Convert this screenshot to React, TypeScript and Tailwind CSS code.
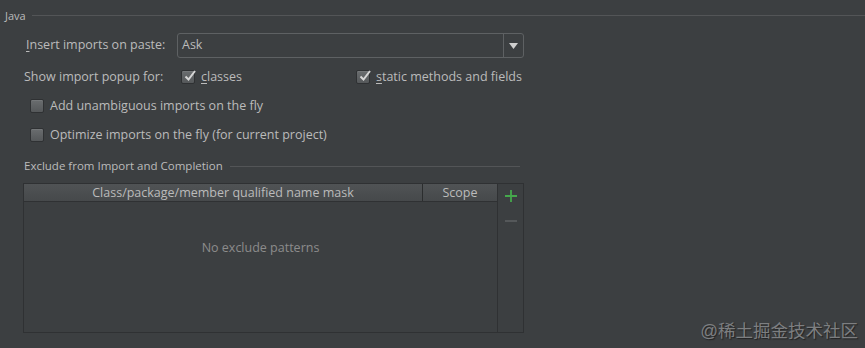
import React from "react";

function CheckBox({ checked }: { checked?: boolean }) {
  return (
    <span className="relative flex h-[14px] w-[14px] shrink-0 items-center justify-center rounded-[2px] border border-[#2f3133] bg-gradient-to-b from-[#6a6d6f] to-[#55585a] shadow-[inset_0_1px_0_rgba(255,255,255,0.08)]">
      {checked ? (
        <svg width="14" height="14" viewBox="0 0 14 14" className="absolute -top-[2px] left-[1px]">
          <path d="M2.5 7.5 L5.5 10.5 L12 2" fill="none" stroke="#d6d6d6" strokeWidth="2" />
        </svg>
      ) : null}
    </span>
  );
}

export default function App() {
  return (
    <div
      className="relative h-[348px] w-[865px] overflow-hidden bg-[#3c3f41] text-[12.5px] text-[#bbbbbb]"
      style={{ fontFamily: '"Open Sans", "Liberation Sans", sans-serif' }}
    >
      {/* Java title */}
      <div className="flex h-[21px] items-center pl-[5px] pt-[9px]">
        <span className="text-[11px] leading-none">Java</span>
        <div className="ml-[6px] h-px flex-1 bg-[#535557]" />
      </div>

      <div className="pl-[24px]">
        {/* Insert imports */}
        <div className="mt-[12px] flex h-[25px] items-center">
          <span className="w-[153px] pl-[2px]">
            <span className="underline underline-offset-2">I</span>nsert imports on paste:
          </span>
          <div className="flex h-[25px] w-[347px] items-stretch rounded-[3px] border border-[#5e6163] bg-[#3c3f41]">
            <span className="flex flex-1 items-center pl-[4px]">Ask</span>
            <span className="flex w-[20px] items-center justify-center border-l border-[#5e6163]">
              <svg width="9" height="6" viewBox="0 0 9 6">
                <path d="M0 0 H9 L4.5 6 Z" fill="#cfcfcf" />
              </svg>
            </span>
          </div>
        </div>

        {/* Show import popup */}
        <div className="mt-[9px] flex h-[20px] items-center">
          <span className="w-[157px]">Show import popup for:</span>
          <CheckBox checked />
          <span className="ml-[6px] w-[155px]">
            <span className="underline underline-offset-2">c</span>lasses
          </span>
          <CheckBox checked />
          <span className="ml-[6px]">
            <span className="underline underline-offset-2">s</span>tatic methods and fields
          </span>
        </div>

        {/* checkboxes */}
        <div className="mt-[9px] flex h-[20px] items-center pl-[6px]">
          <CheckBox />
          <span className="ml-[6px]">Add unambiguous imports on the fly</span>
        </div>
        <div className="mt-[9px] flex h-[20px] items-center pl-[6px]">
          <CheckBox />
          <span className="ml-[6px]">Optimize imports on the fly (for current project)</span>
        </div>

        {/* Exclude section */}
        <div className="mt-[11px] flex h-[20px] items-center pr-[345px]">
          <span className="text-[11.5px]">Exclude from Import and Completion</span>
          <div className="ml-[7px] h-px flex-1 bg-[#535557]" />
        </div>
      </div>

      {/* table */}
      <div className="ml-[23px] mt-[7px] flex h-[150px] w-[501px] border border-[#2f3133]">
        <div className="flex flex-1 flex-col">
          <div className="flex h-[18px] border-b border-[#2f3133] bg-gradient-to-b from-[#505355] to-[#46494b] text-[12.5px] leading-[18px]">
            <span className="flex-1 text-center">Class/package/member qualified name mask</span>
            <span className="w-[75px] border-l border-[#2b2d2e] text-center">Scope</span>
          </div>
          <div className="flex flex-1 items-start justify-center pt-[37px] text-[12.5px] text-[#8c8c8c]">
            No exclude patterns
          </div>
        </div>
        <div className="flex w-[26px] flex-col items-center border-l border-[#2f3133]">
          <svg width="12" height="12" viewBox="0 0 12 12" className="mt-[6px]">
            <path d="M6 0 V12 M0 6 H12" stroke="#45a84c" strokeWidth="1.8" />
          </svg>
          <svg width="12" height="2" viewBox="0 0 12 2" className="mt-[18px]">
            <path d="M0 1 H12" stroke="#55585a" strokeWidth="2" />
          </svg>
        </div>
      </div>

      <div
        className="absolute bottom-[8px] right-[7px] text-[17.5px] leading-none text-[#7d7f81] [text-shadow:1px_1px_1px_#222]"
        style={{ fontFamily: '"Liberation Sans", "Noto Sans CJK SC", sans-serif' }}
      >
        @稀土掘金技术社区
      </div>
    </div>
  );
}
